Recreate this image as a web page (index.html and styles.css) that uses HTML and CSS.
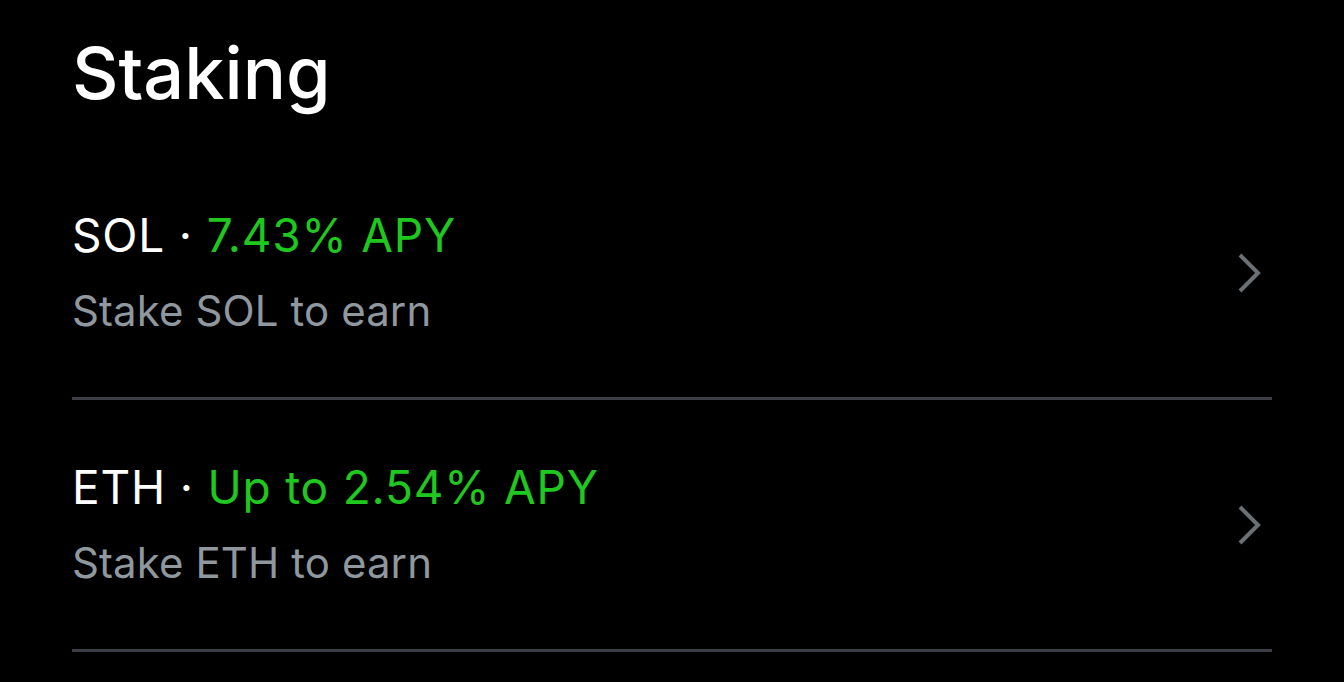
FILE: index.html
```html
<!DOCTYPE html>
<html lang="en">
<head>
<meta charset="utf-8" />
<title>Staking</title>
<link rel="stylesheet" href="styles.css">
</head>
<body>
  <div class="page">
    <h1 class="title">Staking</h1>
    <ul class="list">
      <li class="row">
        <div class="info">
          <div class="name">SOL <span class="dot">&middot;</span> <span class="apy">7.43% APY</span></div>
          <div class="desc">Stake SOL to earn</div>
        </div>
        <svg class="chevron" width="28" height="44" viewBox="0 0 28 44">
          <path d="M4 4 L22 22 L4 40" />
        </svg>
      </li>
      <li class="row">
        <div class="info">
          <div class="name">ETH <span class="dot">&middot;</span> <span class="apy">Up to 2.54% APY</span></div>
          <div class="desc">Stake ETH to earn</div>
        </div>
        <svg class="chevron" width="28" height="44" viewBox="0 0 28 44">
          <path d="M4 4 L22 22 L4 40" />
        </svg>
      </li>
    </ul>
  </div>
</body>
</html>
```
FILE: styles.css
```css
html, body {
    margin: 0;
    background: #000;
}

body {
    font-family: Inter, Roboto, sans-serif;
    color: #fff;
}

.page {
    width: 1200px;
    margin-left: 72px;
}

.title {
    margin: 0;
    height: 148px;
    font-size: 72px;
    font-weight: 500;
    line-height: 146px;
    overflow: hidden;
}

.list {
    list-style: none;
    margin: 0;
    padding: 0;
}

.row {
    height: 249px;
    display: flex;
    align-items: center;
    justify-content: space-between;
    border-bottom: 3px solid #3b3f45;
}

.info {
    display: flex;
    flex-direction: column;
}

.name {
    font-size: 46px;
    line-height: 75px;
    letter-spacing: 0.8px;
}

.apy {
    color: #1ec81e;
}

.desc {
    font-size: 42px;
    line-height: 75px;
    letter-spacing: 0.1px;
    color: #8f989e;
}

.chevron {
    margin-right: 8px;
}

.chevron path {
    fill: none;
    stroke: #6b7075;
    stroke-width: 4;
}
```
